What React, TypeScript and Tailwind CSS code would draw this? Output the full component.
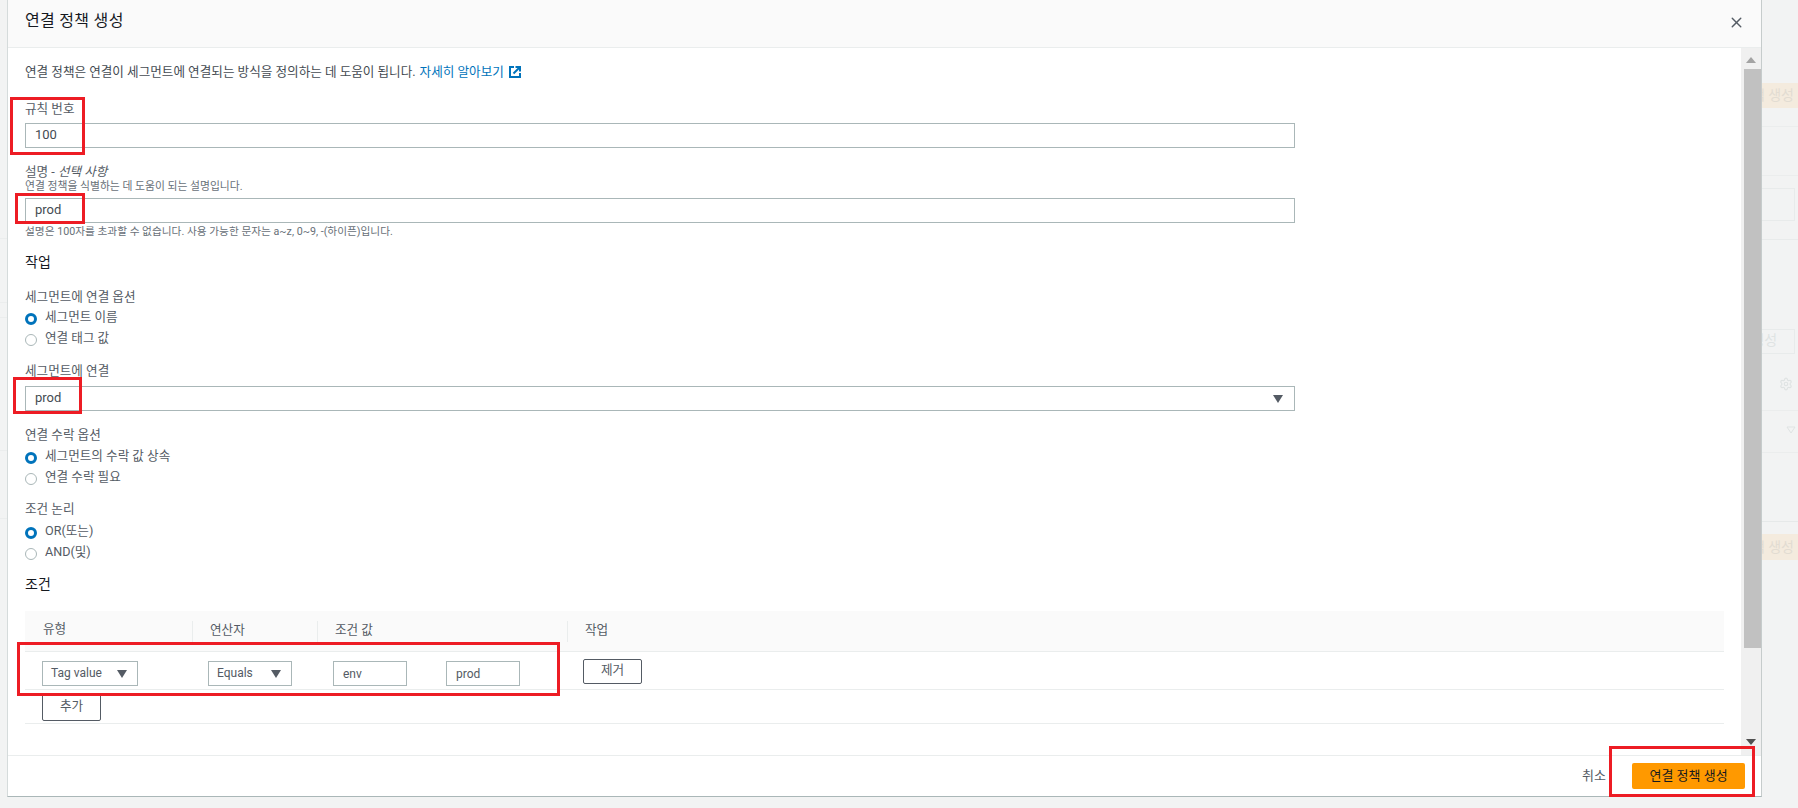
import { Settings, X } from 'lucide-react';

function Caret({ className = '' }: { className?: string }) {
  return (
    <svg width="10" height="8" viewBox="0 0 10 8" className={className}>
      <path d="M0 0h10L5 8z" fill="#545b64" />
    </svg>
  );
}

function LinkIcon() {
  return (
    <svg width="12" height="12" viewBox="0 0 12 12" fill="none" stroke="#0073bb" strokeWidth="2" className="ml-[5px]">
      <path d="M5 1H1v10h10V7" />
      <path d="M4.5 7.5 10 2" />
      <path d="M6.5 1H11v4.5" />
    </svg>
  );
}

function Field({ value, caret = false }: { value: string; caret?: boolean }) {
  return (
    <div className="flex h-[25px] w-[1270px] items-center justify-between border border-[#aab7b8] bg-white pl-[9px] pr-[11px] text-[13px] text-[#444b52]">
      <span className="pb-[1px]">{value}</span>
      {caret && <Caret />}
    </div>
  );
}

function Radio({ label, checked = false }: { label: string; checked?: boolean }) {
  return (
    <div className="flex h-[21px] items-center gap-[8px] text-[12.6px] text-[#545b64]">
      {checked ? (
        <span className="h-[12px] w-[12px] rounded-full border-[3.5px] border-[#0073bb] bg-white" />
      ) : (
        <span className="h-[12px] w-[12px] rounded-full border border-[#aab7b8] bg-white" />
      )}
      <span className="pb-[2px]">{label}</span>
    </div>
  );
}

function Label({ children, className = '' }: { children: React.ReactNode; className?: string }) {
  return <div className={`h-[18px] text-[12.6px] leading-[18px] text-[#545b64] ${className}`}>{children}</div>;
}

function SmallSelect({ value, className }: { value: string; className: string }) {
  return (
    <div className={`flex h-[25px] items-center justify-between border border-[#aab7b8] pl-[8px] pr-[10px] text-[12px] text-[#545b64] ${className}`}>
      <span className="pb-[1px]">{value}</span>
      <Caret />
    </div>
  );
}

function SmallInput({ value }: { value: string }) {
  return (
    <div className="flex h-[25px] w-[74px] items-center border border-[#aab7b8] pl-[9px] text-[12px] text-[#545b64]">
      {value}
    </div>
  );
}

function Outline({ children, className = '' }: { children: React.ReactNode; className?: string }) {
  return (
    <div className={`flex w-[59px] items-center justify-center rounded-[2px] border border-[#545b64] pb-[2px] text-[12.6px] text-[#545b64] ${className}`}>
      {children}
    </div>
  );
}

function RedBox({ className }: { className: string }) {
  return <div className={`absolute border-[3px] border-[#ed1c24] ${className}`} />;
}

function RightStrip() {
  return (
    <div className="flex w-[36px] flex-col overflow-hidden whitespace-nowrap text-[14px] text-[#dfe3e3]">
      <div className="mt-[83px] flex h-[25px] items-center justify-end bg-[#f4ebde] pr-[4px] text-[#e2dcd2]">책 생성</div>
      <div className="mt-[18px] h-px bg-[#ebeded]" />
      <div className="mt-[48px] h-px bg-[#ebeded]" />
      <div className="mt-[12px] h-[33px] w-[33px] border border-l-0 border-[#e8ebeb]" />
      <div className="mt-[18px] h-px bg-[#e8ebeb]" />
      <div className="mt-[89px] flex h-[25px] w-[33px] items-center justify-end border border-l-0 border-[#e8ebeb] pb-[2px] pr-[17px]">생성</div>
      <Settings size={14} className="ml-[17px] mt-[23px] text-[#dfe3e3]" />
      <div className="mt-[19px] h-px bg-[#ebeded]" />
      <svg width="10" height="8" viewBox="0 0 10 8" className="ml-[24px] mt-[15px]">
        <path d="M1 1h8L5 7z" fill="none" stroke="#dfe3e3" />
      </svg>
      <div className="mt-[18px] h-px bg-[#ebeded]" />
      <div className="mt-[68px] h-px bg-[#e6e9e9]" />
      <div className="mt-[12px] flex h-[26px] items-center justify-end bg-[#f4ebde] pr-[4px] text-[#e2dcd2]">책 생성</div>
    </div>
  );
}

export default function App() {
  return (
    <div className="relative flex h-[808px] w-[1798px] overflow-hidden bg-[#f2f3f3] font-['Roboto','Noto_Sans_CJK_KR',sans-serif]">
      {/* faded page behind the dialog */}
      <div className="flex w-[7px] flex-col overflow-hidden text-[14px] text-[#dfe3e3]">
        <div className="mt-[238px] h-px bg-[#ebeded]" />
        <div className="mt-[63px] h-px bg-[#ebeded]" />
        <div className="mt-[14px] h-px bg-[#ebeded]" />
        <div className="mt-[132px] h-px bg-[#ebeded]" />
        <div className="mt-[67px] h-px bg-[#ebeded]" />
      </div>

      <div className="flex h-[797px] w-[1756px] flex-col border-x border-b border-l-[#d5dbdb] border-r-[#c6cccc] border-b-[#aab7b8] bg-white">
        <div className="flex h-[48px] shrink-0 items-center justify-between border-b border-[#eaeded] bg-[#fafafa] pl-[17px] pr-[16px] text-[#16191f]">
          <h1 className="pb-[5px] text-[16px] tracking-[0.3px]">연결 정책 생성</h1>
          <X size={17} className="mb-[3px] text-[#545b64]" />
        </div>

        <div className="flex min-h-0 flex-1">
          <div className="min-w-0 flex-1 overflow-hidden pl-[17px] pr-[17px] pt-[14px]">
            <div className="flex h-[20px] items-center text-[12.6px] text-[#444b52]">
              연결 정책은 연결이 세그먼트에 연결되는 방식을 정의하는 데 도움이 됩니다.
              <span className="ml-[4px] text-[#0073bb]">자세히 알아보기</span>
              <LinkIcon />
            </div>

            <Label className="mt-[18px]">규칙 번호</Label>
            <div className="mt-[5px]">
              <Field value="100" />
            </div>

            <Label className="mt-[15px]">
              설명 - <i>선택 사항</i>
            </Label>
            <div className="mt-[-1px] h-[14px] text-[10.8px] leading-[14px] text-[#687078]">
              연결 정책을 식별하는 데 도움이 되는 설명입니다.
            </div>
            <div className="mt-[4px]">
              <Field value="prod" />
            </div>
            <div className="mt-[2px] h-[14px] text-[10.7px] leading-[14px] text-[#687078]">
              설명은 100자를 초과할 수 없습니다. 사용 가능한 문자는 a~z, 0~9, -(하이픈)입니다.
            </div>

            <h2 className="mt-[13px] h-[20px] text-[14px] leading-[20px] text-[#16191f]">작업</h2>

            <Label className="mt-[16px]">세그먼트에 연결 옵션</Label>
            <div className="mt-[2px]">
              <Radio checked label="세그먼트 이름" />
              <Radio label="연결 태그 값" />
            </div>

            <Label className="mt-[12px]">세그먼트에 연결</Label>
            <div className="mt-[6px]">
              <Field value="prod" caret />
            </div>

            <Label className="mt-[15px]">연결 수락 옵션</Label>
            <div className="mt-[3px]">
              <Radio checked label="세그먼트의 수락 값 상속" />
              <Radio label="연결 수락 필요" />
            </div>

            <Label className="mt-[11px]">조건 논리</Label>
            <div className="mt-[4px]">
              <Radio checked label="OR(또는)" />
              <Radio label="AND(및)" />
            </div>

            <h2 className="mt-[10px] h-[20px] text-[14px] leading-[20px] text-[#16191f]">조건</h2>

            <div className="mt-[17px] text-[12.6px] text-[#545b64]">
              <div className="grid h-[41px] grid-cols-[167px_125px_250px_1fr] items-center border-b border-[#eaeded] bg-[#fafafa]">
                <div className="pb-[4px] pl-[18px]">유형</div>
                <div className="h-[21px] border-l border-[#eaeded] pl-[17px] leading-[17px]">연산자</div>
                <div className="h-[21px] border-l border-[#eaeded] pl-[17px] leading-[17px]">조건 값</div>
                <div className="h-[21px] border-l border-[#eaeded] pl-[17px] leading-[17px]">작업</div>
              </div>
              <div className="grid h-[38px] grid-cols-[167px_125px_250px_1fr] border-b border-[#eaeded] pt-[9px]">
                <div className="pl-[17px]">
                  <SmallSelect value="Tag value" className="w-[96px]" />
                </div>
                <div className="pl-[16px]">
                  <SmallSelect value="Equals" className="w-[84px]" />
                </div>
                <div className="flex gap-[39px] pl-[16px]">
                  <SmallInput value="env" />
                  <SmallInput value="prod" />
                </div>
                <div className="mt-[-2px] pl-[16px]">
                  <Outline className="h-[25px]">제거</Outline>
                </div>
              </div>
              <div className="h-[34px] border-b border-[#eaeded] pl-[17px] pt-[3px]">
                <Outline className="h-[28px]">추가</Outline>
              </div>
            </div>
          </div>

          {/* scrollbar */}
          <div className="flex w-[20px] shrink-0 flex-col items-center bg-[#f0f0f0]">
            <svg width="10" height="6" viewBox="0 0 10 6" className="mt-[9px]">
              <path d="M0 6h10L5 0z" fill="#a3a3a3" />
            </svg>
            <div className="ml-[2px] mt-[6px] h-[579px] w-[17px] bg-[#c1c1c1]" />
            <svg width="10" height="6" viewBox="0 0 10 6" className="mt-[91px]">
              <path d="M0 0h10L5 6z" fill="#505050" />
            </svg>
          </div>
        </div>

        <div className="flex h-[41px] shrink-0 items-center justify-end gap-[26px] border-t border-[#eaeded] pr-[16px] text-[13px]">
          <span className="pb-[1px] text-[#545b64]">취소</span>
          <div className="flex h-[26px] w-[113px] items-center justify-center rounded-[2px] bg-[#ff9900] text-[#16191f]">
            연결 정책 생성
          </div>
        </div>
      </div>

      <RightStrip />

      {/* red annotation boxes drawn over the shot */}
      <RedBox className="left-[10px] top-[97px] h-[58px] w-[75px]" />
      <RedBox className="left-[15px] top-[193px] h-[31px] w-[70px]" />
      <RedBox className="left-[13px] top-[377px] h-[37px] w-[69px]" />
      <RedBox className="left-[17px] top-[642px] h-[54px] w-[543px]" />
      <RedBox className="left-[1609px] top-[746px] h-[51px] w-[146px]" />
    </div>
  );
}
